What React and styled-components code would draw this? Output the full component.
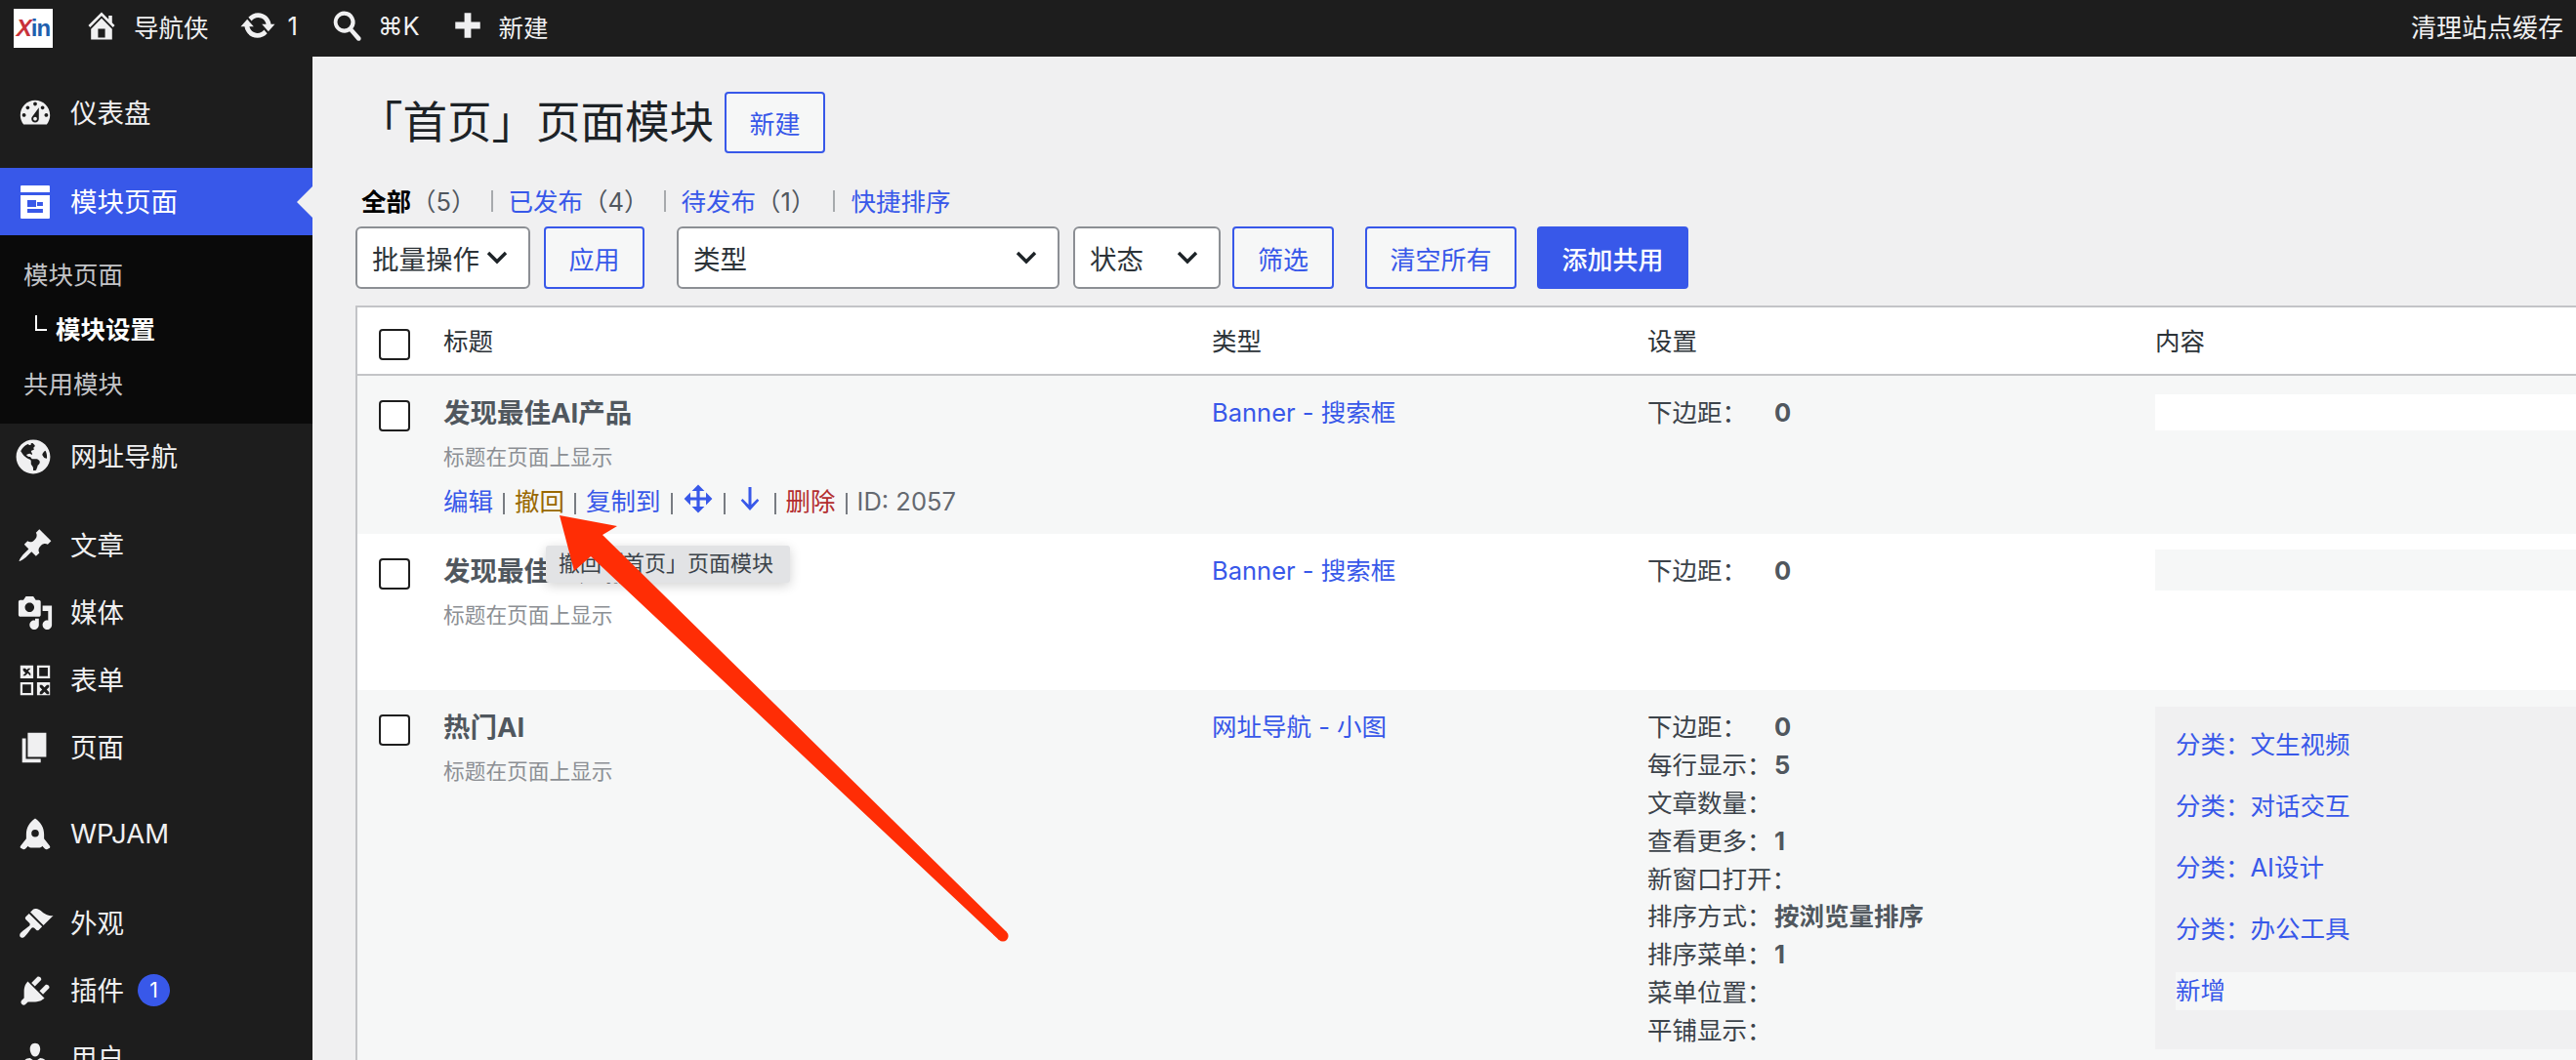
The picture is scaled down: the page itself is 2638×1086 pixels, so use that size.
import React from "react";
import styled, { createGlobalStyle } from "styled-components";
import { FaGlobeAmericas } from "react-icons/fa";

const BLUE = "#3858e9";
const FONT = `Inter, "Noto Sans CJK SC", "Liberation Sans", sans-serif`;

const GlobalStyle = createGlobalStyle`
  html, body {
    margin: 0;
    padding: 0;
    height: 1086px;
    overflow: hidden;
    background: #f0f0f1;
    font-family: ${FONT};
  }
`;

const Page = styled.div`
  position: relative;
  width: 2638px;
  height: 1086px;
  overflow: hidden;
  display: flex;
  flex-direction: column;
`;

// Top bar
const AdminBar = styled.div`
  flex: none;
  height: 58px;
  background: #1d1d1d;
  color: #f0f0f1;
  display: flex;
  align-items: center;
  font-size: 25.5px;
  padding: 0 13px 6px 14px;
  box-sizing: border-box;
`;

const Logo = styled.div`
  width: 40px;
  height: 40px;
  margin-top: 6px;
  background: #fff;
  display: flex;
  align-items: center;
  justify-content: center;
  font-family: "Liberation Sans", sans-serif;
  font-weight: 700;
  font-size: 24px;
  letter-spacing: -1px;
  color: #1f5fae;
`;

const LogoX = styled.span`
  color: #c8323a;
  font-style: italic;
`;

const BarItem = styled.div`
  display: flex;
  align-items: center;
  margin-left: ${(p) => p.$left}px;
  gap: ${(p) => p.$gap}px;
  svg {
    display: block;
    fill: currentColor;
  }
`;

const BarRight = styled.div`
  margin-left: auto;
  font-size: 26px;
`;

// Body below the bar
const Workspace = styled.div`
  flex: 1;
  display: flex;
  min-height: 0;
`;

const Sidebar = styled.nav`
  flex: none;
  width: 320px;
  background: #1d1d1d;
  padding-top: 23px;
  color: #f0f0f1;
`;

const MenuItem = styled.div`
  position: relative;
  height: ${(p) => p.$height || 69}px;
  margin-bottom: ${(p) => p.$after || 0}px;
  display: flex;
  align-items: center;
  padding-left: ${(p) => p.$pad || 17}px;
  font-size: 27.5px;
  background: ${(p) => (p.$active ? BLUE : "transparent")};
  color: ${(p) => (p.$active ? "#fff" : "#f0f0f1")};
  svg {
    flex: none;
    display: block;
    fill: currentColor;
  }
`;

const MenuLabel = styled.span`
  margin-left: ${(p) => p.$left || 17}px;
  margin-bottom: 3px;
`;

const ActiveNotch = styled.span`
  position: absolute;
  right: 0;
  top: 50%;
  margin-top: -16px;
  border-style: solid;
  border-width: 16px 16px 16px 0;
  border-color: transparent #f0f0f1 transparent transparent;
`;

const CountBubble = styled.span`
  margin-left: 14px;
  width: 33px;
  height: 33px;
  border-radius: 50%;
  background: ${BLUE};
  color: #fff;
  font-size: 21px;
  display: flex;
  align-items: center;
  justify-content: center;
`;

const SubMenu = styled.div`
  background: #0a0a0a;
  height: 193px;
  padding-top: 10px;
  box-sizing: border-box;
  font-size: 25.5px;
  color: #c3c4c7;
`;

const SubItem = styled.div`
  height: 56px;
  display: flex;
  align-items: center;
  padding-left: 24px;
  color: ${(p) => (p.$current ? "#fff" : "#c3c4c7")};
  font-weight: ${(p) => (p.$current ? 700 : 400)};
`;

const SubCorner = styled.span`
  width: 12px;
  height: 16px;
  margin: 0 9px 8px 12px;
  border-left: 2px solid #fff;
  border-bottom: 2px solid #fff;
  box-sizing: border-box;
`;

// Main column
const Main = styled.main`
  flex: 1;
  min-width: 0;
  overflow: hidden;
  padding: 36px 0 0 44px;
  color: #3c434a;
  font-size: 25.5px;
`;

const Heading = styled.div`
  display: flex;
  align-items: center;
  height: 63px;
`;

const Title = styled.h1`
  margin: 0 0 0 3px;
  font-size: 45.5px;
  font-weight: 400;
  color: #1d2327;
  line-height: 63px;
  white-space: nowrap;
`;

const Button = styled.div`
  flex: none;
  box-sizing: border-box;
  width: ${(p) => p.$width}px;
  height: ${(p) => p.$height || 64}px;
  margin-left: ${(p) => p.$left || 0}px;
  border: 2.5px solid ${BLUE};
  border-radius: 4px;
  display: flex;
  align-items: center;
  justify-content: center;
  font-size: 26px;
  background: ${(p) => (p.$primary ? BLUE : "#f6f7f7")};
  color: ${(p) => (p.$primary ? "#fff" : BLUE)};
  font-weight: ${(p) => (p.$primary ? 500 : 400)};
`;

const Views = styled.div`
  display: flex;
  align-items: center;
  height: 36px;
  margin: 29px 0 10px 6px;
  white-space: nowrap;
`;

const ViewName = styled.span`
  color: ${(p) => (p.$current ? "#000" : BLUE)};
  font-weight: ${(p) => (p.$current ? 700 : 400)};
`;

const ViewCount = styled.span`
  color: #50575e;
`;

const ViewDivider = styled.span`
  width: 2px;
  height: 22px;
  margin: 4px 16px 0 ${(p) => p.$left}px;
  background: #a7aaad;
`;

const Toolbar = styled.div`
  display: flex;
  align-items: center;
`;

const Select = styled.div`
  flex: none;
  box-sizing: border-box;
  width: ${(p) => p.$width}px;
  height: 64px;
  margin-left: ${(p) => p.$left || 0}px;
  padding: 0 21px 0 15px;
  background: #fff;
  border: 2.5px solid #8c8f94;
  border-radius: 6px;
  display: flex;
  align-items: center;
  justify-content: space-between;
  font-size: 27.5px;
  color: #2c3338;
  svg {
    display: block;
  }
`;

// List table
const Table = styled.div`
  width: 2400px;
  margin: 17px 0 0 0;
  background: #fff;
  border-left: 2px solid #c3c4c7;
  border-top: 2px solid #c3c4c7;
`;

const Row = styled.div`
  position: relative;
  display: grid;
  grid-template-columns: 66px 787px 446px 520px 1fr;
  box-sizing: border-box;
  height: ${(p) => p.$height}px;
  padding-left: 22px;
  background: ${(p) => (p.$striped ? "#f6f7f7" : "#fff")};
  border-bottom: ${(p) => (p.$head ? "2px solid #c3c4c7" : "none")};
`;

const Check = styled.span`
  display: block;
  box-sizing: border-box;
  width: 32px;
  height: 32px;
  margin-top: ${(p) => p.$top || 24.5}px;
  background: #fff;
  border: 2.5px solid #1e1e1e;
  border-radius: 4px;
`;

const HeadCell = styled.div`
  line-height: 70px;
  color: #2c3338;
`;

const Cell = styled.div`
  padding-top: 19px;
  line-height: 38px;
`;

const RowTitle = styled.div`
  font-size: 27.5px;
  font-weight: 700;
  color: #50575e;
`;

const RowHint = styled.div`
  margin-top: 10px;
  font-size: 21.7px;
  line-height: 32px;
  color: #8c8f94;
`;

const RowActions = styled.div`
  display: flex;
  align-items: center;
  height: 36px;
  margin-top: 12px;
  color: #646970;
  white-space: nowrap;
`;

const Action = styled.span`
  color: ${(p) => p.$color || BLUE};
`;

const ActionIcon = styled.svg`
  display: block;
  fill: ${BLUE};
  margin-top: -6px;
`;

const Pipe = styled.span`
  width: 2px;
  height: 22px;
  margin: 3px 10px 0;
  background: #787c82;
`;

const TypeLink = styled.span`
  color: ${BLUE};
`;

const Setting = styled.div`
  display: grid;
  grid-template-columns: 130px 1fr;
  height: 38.9px;
  line-height: 38px;
  color: #3c434a;
  white-space: nowrap;
`;

const SettingValue = styled.span`
  font-weight: 700;
  color: #50575e;
`;

const ContentCell = styled.div`
  padding-top: ${(p) => p.$top}px;
`;

const ContentBox = styled.div`
  box-sizing: border-box;
  height: ${(p) => p.$height}px;
  background: ${(p) => p.$bg};
  padding: ${(p) => (p.$list ? "20px 0 0 21px" : "0")};
`;

const ContentLink = styled.div`
  height: 63px;
  line-height: 38px;
  color: ${BLUE};
`;

const AddBar = styled.div`
  height: 39px;
  line-height: 38px;
  background: #f6f7f7;
  color: ${BLUE};
`;

// Hover tip and the drawn annotation, both lie over the table
const Tooltip = styled.div`
  position: absolute;
  left: 559px;
  top: 559px;
  width: 250px;
  height: 38px;
  box-sizing: border-box;
  padding-left: 13px;
  background: #e2e3e5;
  border-radius: 3px;
  box-shadow: 0 3px 12px rgba(0, 0, 0, 0.18);
  font-size: 22px;
  line-height: 37px;
  color: #3c434a;
  white-space: nowrap;
`;

const Annotation = styled.svg`
  position: absolute;
  left: 0;
  top: 0;
  pointer-events: none;
`;

// Dashicon style glyphs, 20x20 grid
const Icon = ({ size = 38, d }) => (
  <svg width={size} height={size} viewBox="0 0 20 20">
    <path d={d} fillRule="evenodd" />
  </svg>
);

const paths = {
  home: "M16 8.5l1.53 1.53-1.06 1.06L10 4.62l-6.47 6.47-1.06-1.06L10 2.5l4 4v-2h2v4zm-6-2.46l6 5.99V18H4v-5.97zM12 17v-5H8v5h4z",
  update: "M10.2 3.28c3.53 0 6.43 2.61 6.92 6h2.08l-3.5 4-3.5-4h2.32c-.45-1.97-2.21-3.45-4.32-3.45-1.45 0-2.73.71-3.54 1.78L4.95 5.66C6.23 4.2 8.11 3.28 10.2 3.28zm-.4 13.44c-3.52 0-6.43-2.61-6.92-6H.8l3.5-4c1.17 1.33 2.33 2.67 3.5 4H5.48c.45 1.97 2.21 3.45 4.32 3.45 1.45 0 2.73-.71 3.54-1.78l1.71 1.95c-1.28 1.46-3.15 2.38-5.25 2.38z",
  search: "M8.5 1.5a6.5 6.5 0 0 1 5.2 10.4l4.6 5.2c.5.6.4 1.4-.1 1.9s-1.4.4-1.9-.1l-4.5-5.2A6.5 6.5 0 1 1 8.5 1.5zm0 2.4a4.1 4.1 0 1 0 0 8.2 4.1 4.1 0 0 0 0-8.2z",
  plus: "M17.5 8v4h-5.5v5.5H8V12H2.5V8H8V2.5h4V8z",
  dashboard: "M3.76 16h12.48c1.1-1.37 1.76-3.11 1.76-5 0-4.42-3.58-8-8-8s-8 3.58-8 8c0 1.89.66 3.63 1.76 5zM10 4c.55 0 1 .45 1 1s-.45 1-1 1-1-.45-1-1 .45-1 1-1zM6 6c.55 0 1 .45 1 1s-.45 1-1 1-1-.45-1-1 .45-1 1-1zm8 0c.55 0 1 .45 1 1s-.45 1-1 1-1-.45-1-1 .45-1 1-1zm-5.37 5.55L12 7v6c0 1.1-.9 2-2 2s-2-.9-2-2c0-.57.24-1.08.63-1.45zM4 10c.55 0 1 .45 1 1s-.45 1-1 1-1-.45-1-1 .45-1 1-1zm12 0c.55 0 1 .45 1 1s-.45 1-1 1-1-.45-1-1 .45-1 1-1zm-5 3c0-.55-.45-1-1-1s-1 .45-1 1 .45 1 1 1 1-.45 1-1z",
  layout: "M2.2.55h15.6c.3 0 .5.2.5.5V4.4H1.7V1.05c0-.3.2-.5.5-.5zM1.7 6.1h16.6v12.8c0 .3-.2.5-.5.5H2.2c-.3 0-.5-.2-.5-.5zm3.85 2.8v3.9h5V8.9zm5.55 1.1v2.2h3.3V10zm-5.55 3.9v2.2h8.85v-2.2z",
  post: "M10.44 3.02l1.82-1.82 6.36 6.35-1.83 1.82c-1.05-.68-2.48-.57-3.41.36l-.75.75c-.92.93-1.04 2.35-.35 3.41l-1.83 1.82-2.41-2.41-2.8 2.79c-.42.42-3.38 2.71-3.8 2.29s1.86-3.39 2.28-3.81l2.79-2.79L4.1 9.36l1.83-1.82c1.05.69 2.48.57 3.4-.36l.75-.75c.93-.92 1.05-2.35.36-3.41z",
  media: "M13 11V4c0-.55-.45-1-1-1h-1.67L9 1H5L3.67 3H2c-.55 0-1 .45-1 1v7c0 .55.45 1 1 1h10c.55 0 1-.45 1-1zM7 4.5c1.38 0 2.5 1.12 2.5 2.5S8.38 9.5 7 9.5 4.5 8.38 4.5 7 5.62 4.5 7 4.5zM14 6h5v10.5c0 1.38-1.12 2.5-2.5 2.5S14 17.88 14 16.5s1.12-2.5 2.5-2.5c.17 0 .34.02.5.05V9h-3V6zm-4 8.05V13h2v3.5c0 1.38-1.12 2.5-2.5 2.5S7 17.88 7 16.5 8.12 14 9.5 14c.17 0 .34.02.5.05z",
  forms: "M2 2h7v7H2zm1.5 1.5v1.2L4.8 6 3.5 7.3v.2h1.2L6 6.2l1.3 1.3h.2V6.3L6.2 5l1.3-1.3v-.2H6.3L5.5 4.3 4.7 3.5zM11 2h7v7h-7zm1.2 1.2v4.6h4.6V3.2zM2 11h7v7H2zm1.2 1.2v4.6h4.6v-4.6zM11 11h7v7h-7zm1.5 1.5v1.2l1.3 1.3-1.3 1.3v1.2h1.2L15 16.2l1.3 1.3h1.2v-1.2L16.2 15l1.3-1.3v-1.2h-1.2L15 13.8l-1.3-1.3z",
  page: "M6 15V2h10v13H6zm-1 1h8v2H3V5h2v11z",
  rocket: "M10 .8c3 2 4.8 5 4.8 8.5v2.4l3 3.8c.4.5.3 1.1-.2 1.4l-1 .5c-.5.2-1 .1-1.4-.3l-1.4-1.4c-.3.6-.8.9-1.4.9H7.6c-.6 0-1.1-.3-1.4-.9l-1.4 1.4c-.4.4-.9.5-1.4.3l-1-.5c-.5-.3-.6-.9-.2-1.4l3-3.8V9.3C5.2 5.8 7 2.8 10 .8zm0 6a2 2 0 1 0 0 4 2 2 0 0 0 0-4z",
  appearance: "M14.48 11.06L7.41 3.99l1.5-1.5c.5-.56 2.3-.47 3.51.32 1.21.8 1.43 1.28 2.91 2.1 1.18.64 2.45 1.26 4.45.85zM6.7 4.7l7.07 7.07L12 13.54c-.39.39-1.02.39-1.41 0l-1.06-1.06c-.39-.39-1.03-.39-1.42 0-.6.6-1.11 1.43-1.69 2.21-.58.78-1.3 1.7-2 2.4-.7.7-1.8.9-2.4.3-.6-.6-.4-1.7.3-2.4.7-.7 1.62-1.42 2.4-2 .78-.58 1.61-1.09 2.21-1.69.39-.39.39-1.03 0-1.42l-2-2c-.39-.39-.39-1.02 0-1.41z",
  plugins: "M13.11 4.36L9.87 7.6 8 5.73l3.24-3.24c.35-.34 1.05-.2 1.56.32.52.51.66 1.21.31 1.55zm-8 1.77l.91-1.12 9.01 9.01-1.19.84c-.71.71-2.63 1.16-3.82 1.16H6.14L4.9 17.26c-.59.59-1.54.59-2.12 0-.59-.58-.59-1.53 0-2.12l1.24-1.24v-3.88c0-1.13.4-3.19 1.09-3.89zm7.26 3.97l3.24-3.24c.34-.35 1.04-.21 1.55.31.52.51.66 1.21.31 1.55l-3.24 3.25z",
  users: "M10 9.25c-2.27 0-2.73-3.44-2.73-3.44C7 4.02 7.82 2 9.97 2c2.16 0 2.98 2.02 2.71 3.81 0 0-.41 3.44-2.68 3.44zm0 2.57L12.72 10c2.39 0 4.52 2.33 4.52 4.53v2.49s-3.65 1.13-7.24 1.13c-3.65 0-7.24-1.13-7.24-1.13v-2.49c0-2.25 1.94-4.48 4.47-4.48z",
  move: "M19 10l-4 4v-3h-4v4h3l-4 4-4-4h3v-4H5v3l-4-4 4-4v3h4V5H6l4-4 4 4h-3v4h4V6z",
  down: "M9 2h2v12l4-4 1.2 1.2L10 18l-6.2-6.8L5 10l4 4V2z",
};

const Chevron = () => (
  <svg width="22" height="14" viewBox="0 0 22 14" fill="none" stroke="#1d2327" strokeWidth="3.4">
    <path d="M2 2l9 9 9-9" />
  </svg>
);

const menuTop = [
  { icon: "post", label: "文章" },
  { icon: "media", label: "媒体" },
  { icon: "forms", label: "表单" },
  { icon: "page", label: "页面", after: 21 },
  { icon: "rocket", label: "WPJAM", after: 21 },
  { icon: "appearance", label: "外观" },
  { icon: "plugins", label: "插件", count: 1 },
  { icon: "users", label: "用户" },
];

const settings = [
  ["下边距：", "0"],
  ["每行显示：", "5"],
  ["文章数量：", ""],
  ["查看更多：", "1"],
  ["新窗口打开：", ""],
  ["排序方式：", "按浏览量排序"],
  ["排序菜单：", "1"],
  ["菜单位置：", ""],
  ["平铺显示：", ""],
];

const categories = ["分类：文生视频", "分类：对话交互", "分类：AI设计", "分类：办公工具"];

export default function App() {
  return (
    <Page>
      <GlobalStyle />
      <AdminBar>
        <Logo>
          <LogoX>X</LogoX>in
        </Logo>
        <BarItem $left={32} $gap={15}>
          <Icon size={36} d={paths.home} />
          导航侠
        </BarItem>
        <BarItem $left={31} $gap={12}>
          <Icon size={38} d={paths.update} />1
        </BarItem>
        <BarItem $left={33} $gap={15}>
          <Icon size={34} d={paths.search} />⌘K
        </BarItem>
        <BarItem $left={32} $gap={15}>
          <Icon size={34} d={paths.plus} />新建
        </BarItem>
        <BarRight>清理站点缓存</BarRight>
      </AdminBar>

      <Workspace>
        <Sidebar>
          <MenuItem $after={22}>
            <Icon d={paths.dashboard} />
            <MenuLabel>仪表盘</MenuLabel>
          </MenuItem>
          <MenuItem $active $pad={18}>
            <Icon size={36} d={paths.layout} />
            <MenuLabel $left={18}>模块页面</MenuLabel>
            <ActiveNotch />
          </MenuItem>
          <SubMenu>
            <SubItem>模块页面</SubItem>
            <SubItem $current>
              <SubCorner />
              模块设置
            </SubItem>
            <SubItem>共用模块</SubItem>
          </SubMenu>
          <MenuItem $height={67} $after={23} $pad={16}>
            <FaGlobeAmericas size={36} />
            <MenuLabel $left={20}>网址导航</MenuLabel>
          </MenuItem>
          {menuTop.map((item) => (
            <MenuItem key={item.label} $after={item.after}>
              <Icon d={paths[item.icon]} />
              <MenuLabel>{item.label}</MenuLabel>
              {item.count && <CountBubble>{item.count}</CountBubble>}
            </MenuItem>
          ))}
        </Sidebar>

        <Main>
          <Heading>
            <Title>「首页」页面模块</Title>
            <Button $width={103} $height={63} $left={11}>
              新建
            </Button>
          </Heading>

          <Views>
            <ViewName $current>全部</ViewName>
            <ViewCount>（5）</ViewCount>
            <ViewDivider $left={15} />
            <ViewName>已发布</ViewName>
            <ViewCount>（4）</ViewCount>
            <ViewDivider $left={15} />
            <ViewName>待发布</ViewName>
            <ViewCount>（1）</ViewCount>
            <ViewDivider $left={18} />
            <ViewName>快捷排序</ViewName>
          </Views>

          <Toolbar>
            <Select $width={179}>
              批量操作
              <Chevron />
            </Select>
            <Button $width={103} $left={14}>
              应用
            </Button>
            <Select $width={392} $left={33}>
              类型
              <Chevron />
            </Select>
            <Select $width={151} $left={14}>
              状态
              <Chevron />
            </Select>
            <Button $width={104} $left={12}>
              筛选
            </Button>
            <Button $width={155} $left={32}>
              清空所有
            </Button>
            <Button $width={155} $left={21} $primary>
              添加共用
            </Button>
          </Toolbar>

          <Table>
            <Row $head $height={70}>
              <Check $top={22} />
              <HeadCell>标题</HeadCell>
              <HeadCell>类型</HeadCell>
              <HeadCell>设置</HeadCell>
              <HeadCell>内容</HeadCell>
            </Row>

            <Row $striped $height={162}>
              <Check />
              <Cell>
                <RowTitle>发现最佳AI产品</RowTitle>
                <RowHint>标题在页面上显示</RowHint>
                <RowActions>
                  <Action>编辑</Action>
                  <Pipe />
                  <Action $color="#996800">撤回</Action>
                  <Pipe />
                  <Action>复制到</Action>
                  <Pipe />
                  <ActionIcon width="32" height="32" viewBox="0 0 20 20">
                    <path d={paths.move} />
                  </ActionIcon>
                  <Pipe />
                  <ActionIcon width="30" height="32" viewBox="0 0 20 20">
                    <path d={paths.down} />
                  </ActionIcon>
                  <Pipe />
                  <Action $color="#b32d2e">删除</Action>
                  <Pipe />
                  ID: 2057
                </RowActions>
              </Cell>
              <Cell>
                <TypeLink>Banner - 搜索框</TypeLink>
              </Cell>
              <Cell>
                <Setting>
                  <span>下边距：</span>
                  <SettingValue>0</SettingValue>
                </Setting>
              </Cell>
              <ContentCell $top={19}>
                <ContentBox $height={37} $bg="#fff" />
              </ContentCell>
            </Row>

            <Row $height={160}>
              <Check />
              <Cell>
                <RowTitle>发现最佳AI产品</RowTitle>
                <RowHint>标题在页面上显示</RowHint>
              </Cell>
              <Cell>
                <TypeLink>Banner - 搜索框</TypeLink>
              </Cell>
              <Cell>
                <Setting>
                  <span>下边距：</span>
                  <SettingValue>0</SettingValue>
                </Setting>
              </Cell>
              <ContentCell $top={16}>
                <ContentBox $height={42} $bg="#f6f7f7" />
              </ContentCell>
            </Row>

            <Row $striped $height={420}>
              <Check />
              <Cell>
                <RowTitle>热门AI</RowTitle>
                <RowHint>标题在页面上显示</RowHint>
              </Cell>
              <Cell>
                <TypeLink>网址导航 - 小图</TypeLink>
              </Cell>
              <Cell>
                {settings.map(([label, value]) => (
                  <Setting key={label}>
                    <span>{label}</span>
                    <SettingValue>{value}</SettingValue>
                  </Setting>
                ))}
              </Cell>
              <ContentCell $top={17}>
                <ContentBox $list $height={351} $bg="#f0f0f1">
                  {categories.map((name) => (
                    <ContentLink key={name}>{name}</ContentLink>
                  ))}
                  <AddBar>新增</AddBar>
                </ContentBox>
              </ContentCell>
            </Row>
          </Table>
        </Main>
      </Workspace>

      <Tooltip>撤回「首页」页面模块</Tooltip>

      <Annotation width="2638" height="1086" viewBox="0 0 2638 1086">
        <polygon points="573,528 632,539 617,548 1031,955 1023,963 605,570 588,585" fill="#ff2d05" />
        <circle cx="1027" cy="959" r="5.6" fill="#ff2d05" />
      </Annotation>
    </Page>
  );
}
